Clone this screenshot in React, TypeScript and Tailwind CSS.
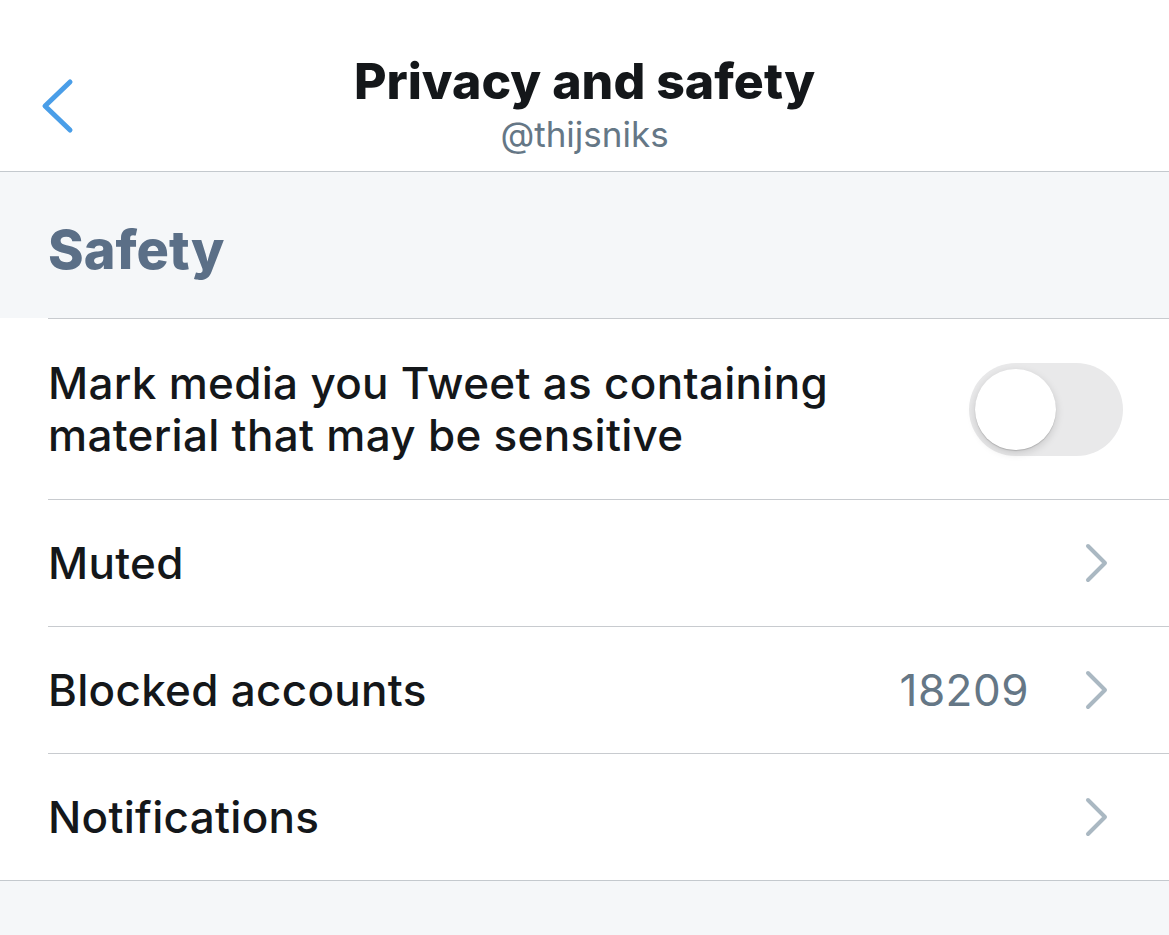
import React, { useState } from "react";

function Chevron() {
  return (
    <svg width="24" height="40" viewBox="0 0 24 40" fill="none" className="shrink-0">
      <path d="M3 3l17 17L3 37" stroke="#aab8c2" strokeWidth="4" strokeLinecap="round" strokeLinejoin="round" />
    </svg>
  );
}

function Row({ label, value }: { label: string; value?: string }) {
  return (
    <div className="flex items-center h-[126px] pl-[48px] pr-[60px]">
      <span className="flex-1 text-[44px] leading-[53px] font-medium text-[#14171a] tracking-[0.3px]">{label}</span>
      {value && <span className="text-[44px] leading-[53px] text-[#657786] tracking-[0.5px] mr-[56px]">{value}</span>}
      <Chevron />
    </div>
  );
}

function Divider() {
  return <div className="h-px bg-[#c8cbcf] ml-[48px]" />;
}

export default function App() {
  const [sensitive, setSensitive] = useState(false);

  return (
    <div className="w-[1169px] h-[935px] bg-[#f5f7f9] overflow-hidden" style={{ fontFamily: "Inter, 'Noto Sans', sans-serif" }}>
      <header className="relative h-[172px] bg-white border-b border-[#c4c9ce] flex flex-col items-center pt-[51px]">
        <button className="absolute left-[40px] top-[78px]">
          <svg width="36" height="56" viewBox="0 0 36 56" fill="none">
            <path d="M30 4L5 28l25 24" stroke="#4a9ee8" strokeWidth="5" strokeLinecap="round" strokeLinejoin="round" />
          </svg>
        </button>
        <h1 className="text-[50px] font-extrabold text-[#14171a] leading-[60px] tracking-[0px]">Privacy and safety</h1>
        <p className="text-[35px] text-[#657786] leading-[42px] mt-[2px]">@thijsniks</p>
      </header>

      <div className="h-[146px] pl-[48px] pt-[46px]">
        <h2 className="text-[54px] leading-[64px] font-extrabold text-[#5b6f87]">Safety</h2>
      </div>

      <div className="bg-white border-b border-[#c4c9ce]">
        <Divider />
        <div className="flex items-center h-[180px] pl-[48px] pr-[46px]">
          <p className="flex-1 text-[44px] font-medium text-[#14171a] leading-[52px] tracking-[0.3px]">
            Mark media you Tweet as containing
            <br />
            material that may be sensitive
          </p>
          <button
            onClick={() => setSensitive(!sensitive)}
            className={`w-[154px] h-[93px] rounded-full p-[6px] flex ${sensitive ? "bg-[#4cd964] justify-end" : "bg-[#e9e9ea] justify-start"}`}
          >
            <span className="w-[81px] h-[81px] rounded-full bg-white shadow-[0_3px_8px_rgba(0,0,0,0.15),0_1px_1px_rgba(0,0,0,0.16)]" />
          </button>
        </div>
        <Divider />
        <Row label="Muted" />
        <Divider />
        <Row label="Blocked accounts" value="18209" />
        <Divider />
        <Row label="Notifications" />
      </div>
    </div>
  );
}
